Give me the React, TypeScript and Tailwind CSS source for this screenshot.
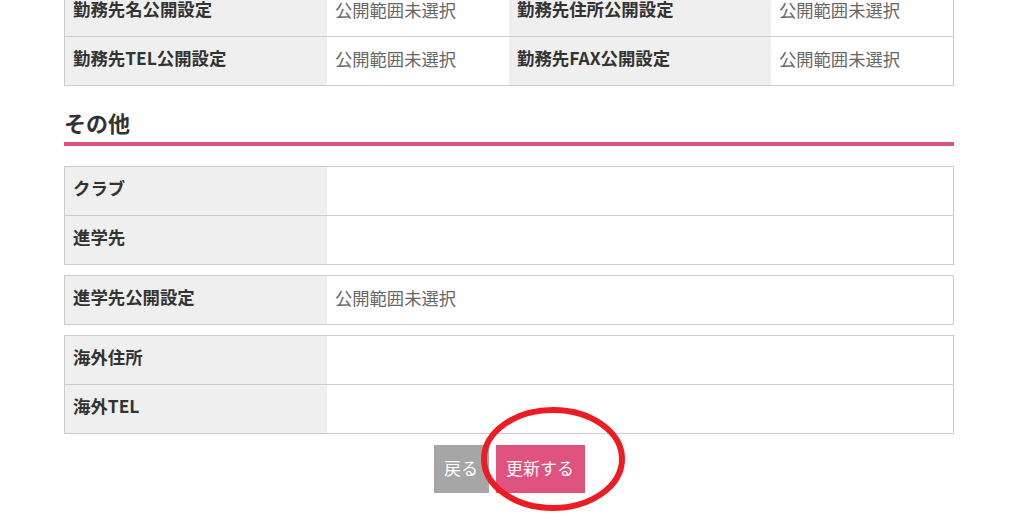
const font = "font-['Noto_Sans_CJK_JP','Noto_Sans',sans-serif]";

type Cell = { label: string; value?: string };

function Row({ cells, last }: { cells: Cell[]; last?: boolean }) {
  return (
    <div className={`flex ${last ? "" : "border-b border-[#cccccc]"}`}>
      {cells.map((c, i) => (
        <div key={i} className={`flex ${cells.length === 1 ? "flex-1" : "w-[445px]"}`}>
          <div className="flex h-12 w-[262px] shrink-0 items-center bg-[#efefef] pb-[5px] pl-[8px] text-[17.4px] font-bold text-[#333333]">
            {c.label}
          </div>
          <div className="flex h-12 flex-1 items-center pb-[5px] pl-[8px] text-[17.3px] text-[#666666]">
            {c.value}
          </div>
        </div>
      ))}
    </div>
  );
}

function Table({ rows, className = "" }: { rows: Cell[][]; className?: string }) {
  return (
    <div className={`border border-[#cccccc] ${className}`}>
      {rows.map((r, i) => (
        <Row key={i} cells={r} last={i === rows.length - 1} />
      ))}
    </div>
  );
}

const unset = "公開範囲未選択";

export default function App() {
  return (
    <div className={`relative h-[514px] w-[1014px] overflow-hidden bg-white ${font}`}>
      <div className="ml-[64px] w-[890px]">
        <Table
          className="-mt-[13px]"
          rows={[
            [
              { label: "勤務先名公開設定", value: unset },
              { label: "勤務先住所公開設定", value: unset },
            ],
            [
              { label: "勤務先TEL公開設定", value: unset },
              { label: "勤務先FAX公開設定", value: unset },
            ],
          ]}
        />

        <h2 className="mt-[20px] border-b-4 border-[#df527e] pb-[3px] text-[22px] font-bold leading-[33px] text-[#333333]">
          その他
        </h2>

        <Table className="mt-[20px]" rows={[[{ label: "クラブ" }], [{ label: "進学先" }]]} />
        <Table className="mt-[10px]" rows={[[{ label: "進学先公開設定", value: unset }]]} />
        <Table className="mt-[10px]" rows={[[{ label: "海外住所" }], [{ label: "海外TEL" }]]} />

        <div className="mt-[11px] flex justify-center gap-[7px]">
          <button className="flex h-12 w-[55px] items-center justify-center bg-[#a6a6a6] pb-[2px] text-[17px] text-white">
            戻る
          </button>
          <button className="flex h-12 w-[89px] items-center justify-center bg-[#df527e] pb-[2px] text-[17px] text-white">
            更新する
          </button>
        </div>
      </div>

      <svg
        className="pointer-events-none absolute left-[479px] top-[405px]"
        width="148"
        height="108"
        viewBox="0 0 148 108"
      >
        <ellipse cx="74" cy="54" rx="69" ry="49" fill="none" stroke="#ec1c24" strokeWidth="6" />
      </svg>
    </div>
  );
}
